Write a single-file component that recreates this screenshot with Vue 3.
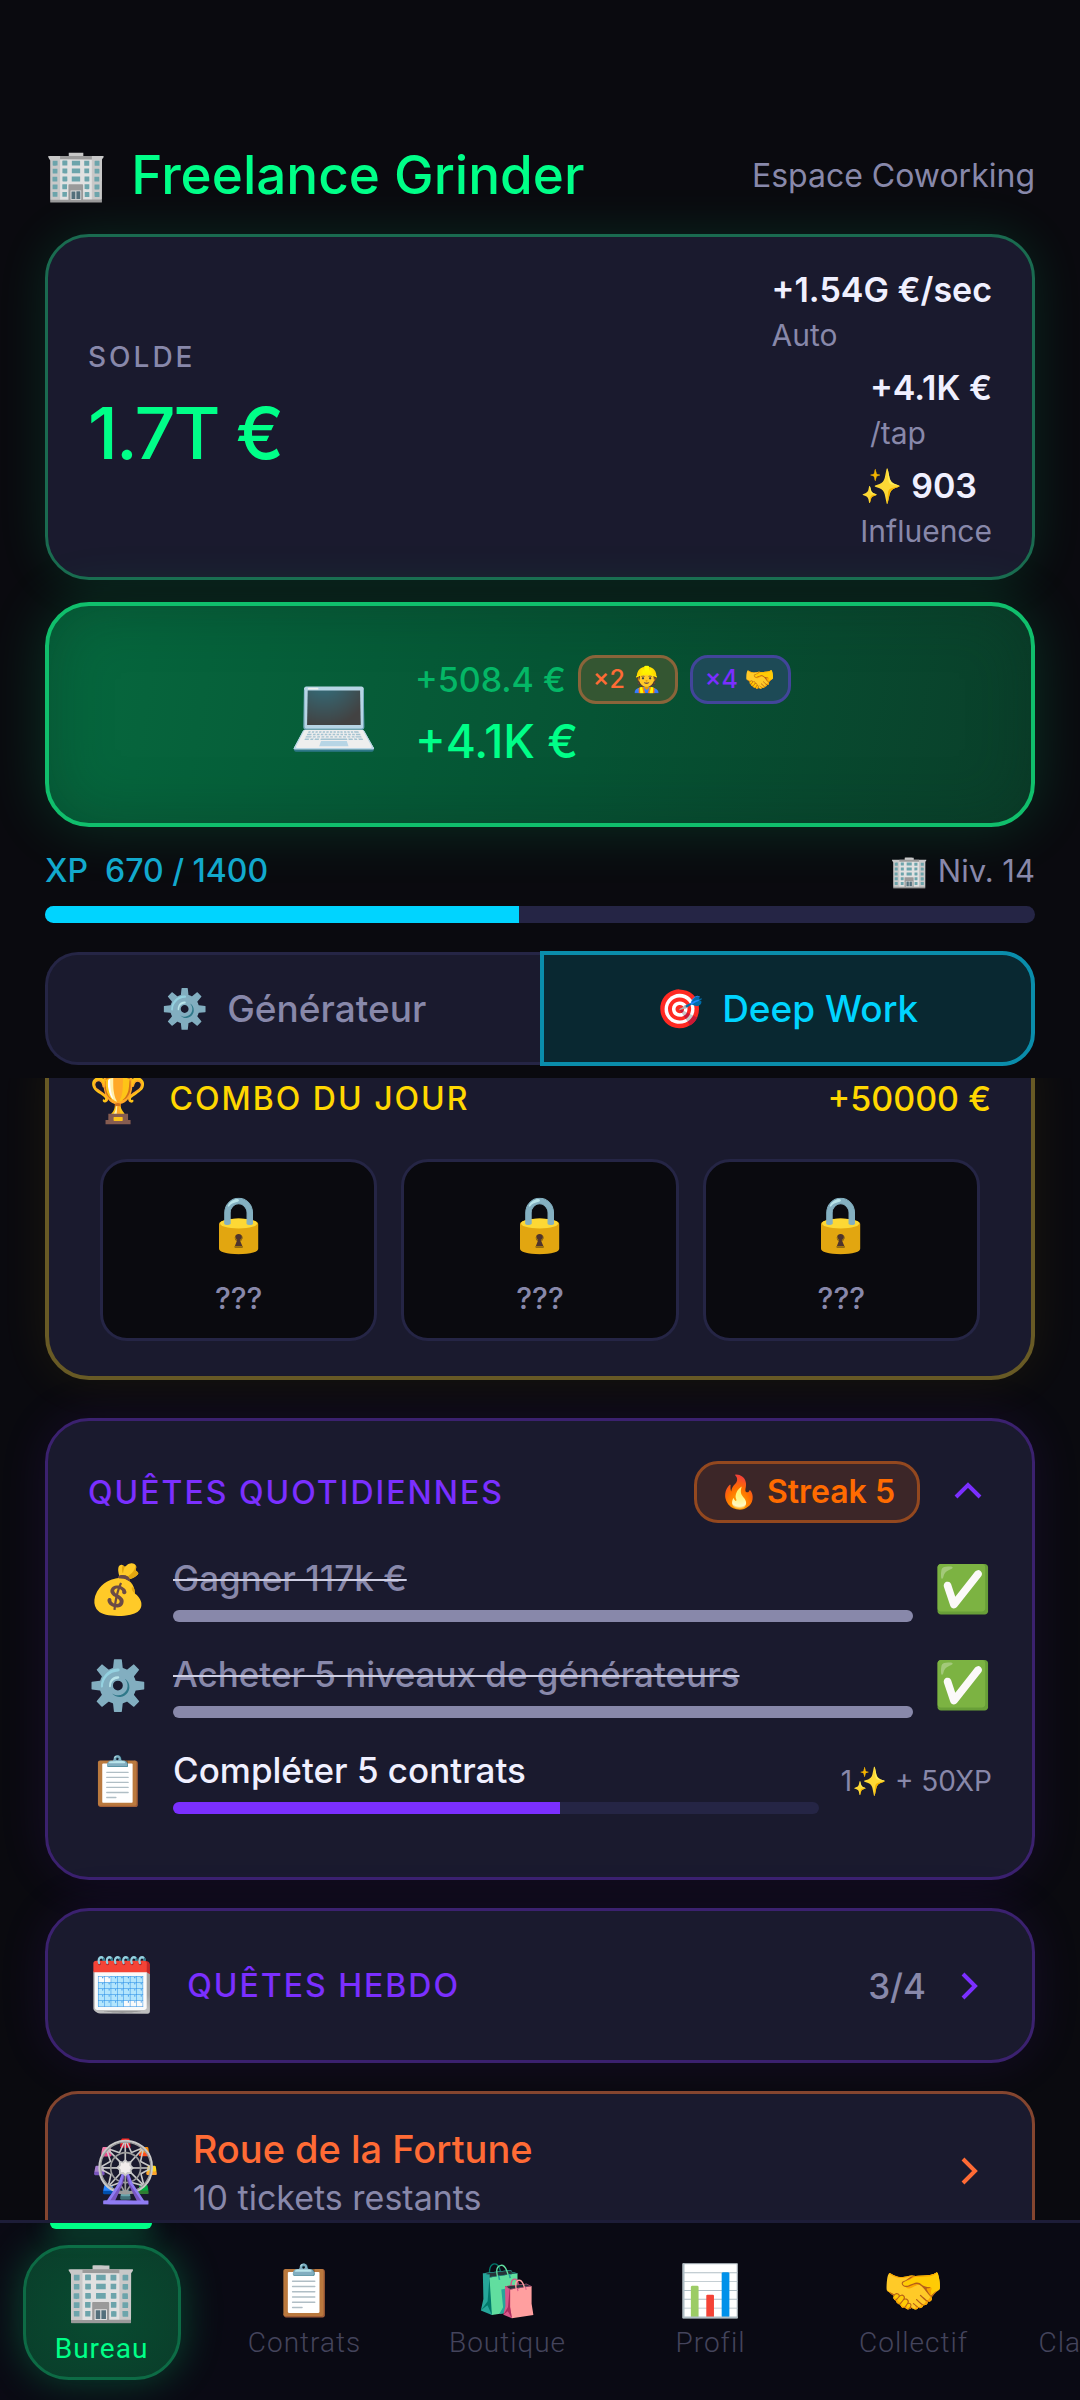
<template>
  <div class="app">
    <header class="top">
      <div class="title-row">
        <span class="emoji e-title">🏢</span>
        <h1>Freelance Grinder</h1>
        <span class="place">Espace Coworking</span>
      </div>

      <section class="balance">
        <div class="balance-main">
          <span class="balance-label">SOLDE</span>
          <strong class="balance-value">1.7T €</strong>
        </div>
        <div class="stats">
          <div v-for="stat in stats" :key="stat.label" class="stat">
            <span class="stat-value"><span v-if="stat.icon" class="emoji">{{ stat.icon }}</span> {{ stat.value }}</span>
            <span class="stat-label">{{ stat.label }}</span>
          </div>
        </div>
      </section>

      <button class="tap" type="button">
        <span class="emoji e-laptop">💻</span>
        <span class="tap-info">
          <span class="tap-line">
            <span class="tap-base">+508.4 €</span>
            <span class="boost boost-orange">×2 <span class="emoji">👷</span></span>
            <span class="boost boost-purple">×4 <span class="emoji">🤝</span></span>
          </span>
          <span class="tap-total">+4.1K €</span>
        </span>
      </button>

      <div class="xp-row">
        <span class="xp-label">XP&nbsp; {{ xp }} / {{ xpMax }}</span>
        <span class="level"><span class="emoji">🏢</span> Niv. 14</span>
      </div>
      <div class="bar xp-bar">
        <div class="fill fill-cyan" :style="{ width: `${(xp / xpMax) * 100}%` }"></div>
      </div>

      <div class="tabs">
        <button
          v-for="tab in tabs"
          :key="tab.id"
          type="button"
          class="tab"
          :class="{ active: activeTab === tab.id }"
          @click="activeTab = tab.id"
        >
          <span class="emoji tab-icon">{{ tab.icon }}</span>{{ tab.label }}
        </button>
      </div>
    </header>

    <main ref="feed" class="feed">
      <section class="card combo">
        <div class="combo-head">
          <span class="emoji e-trophy">🏆</span>
          <h2>COMBO DU JOUR</h2>
          <span class="combo-reward">+50000 €</span>
        </div>
        <div class="tiles">
          <button v-for="n in 3" :key="n" type="button" class="tile">
            <span class="emoji e-lock">🔒</span>
            <span>???</span>
          </button>
        </div>
      </section>

      <section class="card quests">
        <div class="quests-head">
          <h2>QUÊTES QUOTIDIENNES</h2>
          <span class="streak"><span class="emoji">🔥</span> Streak 5</span>
          <button type="button" class="toggle" aria-label="Replier">
            <svg class="chevron" viewBox="0 0 48 48"><path d="M12 29 24 17l12 12" /></svg>
          </button>
        </div>
        <ul class="quest-list">
          <li v-for="quest in quests" :key="quest.label" class="quest" :class="{ done: quest.progress === 100 }">
            <span class="emoji quest-icon">{{ quest.icon }}</span>
            <div class="quest-body">
              <span class="quest-label">{{ quest.label }}</span>
              <div class="bar">
                <div class="fill" :style="{ width: `${quest.progress}%` }"></div>
              </div>
            </div>
            <span v-if="quest.progress === 100" class="emoji quest-check">✅</span>
            <span v-else class="quest-reward">1<span class="emoji">✨</span> + 50XP</span>
          </li>
        </ul>
      </section>

      <button type="button" class="card weekly">
        <span class="emoji e-calendar">🗓️</span>
        <span class="weekly-title">QUÊTES HEBDO</span>
        <span class="weekly-count">3/4</span>
        <svg class="chevron" viewBox="0 0 48 48"><path d="m19 12 12 12-12 12" /></svg>
      </button>

      <button type="button" class="card wheel">
        <span class="emoji e-wheel">🎡</span>
        <span class="wheel-text">
          <span class="wheel-title">Roue de la Fortune</span>
          <span class="wheel-sub">10 tickets restants</span>
        </span>
        <svg class="chevron" viewBox="0 0 48 48"><path d="m19 12 12 12-12 12" /></svg>
      </button>
    </main>

    <nav class="nav">
      <a
        v-for="item in navItems"
        :key="item.label"
        href="#"
        class="nav-item"
        :class="{ current: item.label === 'Bureau' }"
      >
        <span class="nav-pill">
          <span class="emoji nav-icon">{{ item.icon }}</span>
          <span>{{ item.label }}</span>
        </span>
      </a>
    </nav>
  </div>
</template>

<script setup>
import { ref, onMounted } from 'vue'

const xp = ref(670)
const xpMax = ref(1400)
const activeTab = ref('deep')
const feed = ref(null)

const stats = [
  { value: '+1.54G €/sec', label: 'Auto' },
  { value: '+4.1K €', label: '/tap' },
  { icon: '✨', value: '903', label: 'Influence' }
]

const tabs = [
  { id: 'gen', icon: '⚙️', label: 'Générateur' },
  { id: 'deep', icon: '🎯', label: 'Deep Work' }
]

const quests = [
  { icon: '💰', label: 'Gagner 117k €', progress: 100 },
  { icon: '⚙️', label: 'Acheter 5 niveaux de générateurs', progress: 100 },
  { icon: '📋', label: 'Compléter 5 contrats', progress: 60 }
]

const navItems = [
  { icon: '🏢', label: 'Bureau' },
  { icon: '📋', label: 'Contrats' },
  { icon: '🛍️', label: 'Boutique' },
  { icon: '📊', label: 'Profil' },
  { icon: '🤝', label: 'Collectif' },
  { icon: '', label: 'Classement' }
]

// the feed opens slightly scrolled, under the fixed header
onMounted(() => {
  feed.value.scrollTop = 60
})
</script>

<style>
body {
  margin: 0;
  background: #0a0a0f;
}
</style>

<style scoped>
* {
  box-sizing: border-box;
}

.app {
  display: flex;
  flex-direction: column;
  height: 100vh;
  overflow: hidden;
  background: #0a0a0f;
  color: #f0f0ff;
  font-family: Inter, "Liberation Sans", sans-serif;
  font-size: 32px;
  font-weight: 500;
}

button {
  font: inherit;
  color: inherit;
  cursor: pointer;
}

h1,
h2 {
  margin: 0;
}

.emoji {
  font-family: "Noto Color Emoji", sans-serif;
  font-weight: 400;
  letter-spacing: 0;
}

/* header */
.top {
  padding: 140px 45px 12px;
}

.title-row {
  display: flex;
  align-items: center;
  height: 70px;
  margin-bottom: 24px;
}

.e-title {
  font-size: 50px;
}

h1 {
  margin-left: 24px;
  flex: 1;
  color: #00ff88;
  font-size: 53px;
  font-weight: 500;
}

.place {
  color: #8888aa;
  font-weight: 400;
}

.balance {
  display: flex;
  align-items: center;
  justify-content: space-between;
  padding: 29px 40px 25px;
  background: #1a1a2e;
  border: 3px solid #1a6b50;
  border-radius: 44px;
  box-shadow: 0 0 50px rgba(0, 255, 136, 0.12);
}

.balance-main {
  display: flex;
  flex-direction: column;
  gap: 8px;
}

.balance-label {
  color: #8888aa;
  font-size: 28px;
  line-height: 40px;
  letter-spacing: 3px;
}

.balance-value {
  color: #00ff88;
  font-size: 72px;
  font-weight: 500;
  line-height: 96px;
  letter-spacing: -2px;
}

.stats {
  display: flex;
  flex-direction: column;
  align-items: flex-end;
  gap: 8px;
}

.stat {
  display: flex;
  flex-direction: column;
}

.stat-value {
  font-size: 34px;
  font-weight: 600;
  line-height: 48px;
}

.stat-label {
  color: #8888aa;
  font-size: 30px;
  font-weight: 400;
  line-height: 42px;
}

.tap {
  display: flex;
  align-items: center;
  justify-content: center;
  gap: 36px;
  width: 100%;
  margin-top: 22px;
  padding: 49px 40px 53px;
  border: 4px solid #10bf6c;
  border-radius: 44px;
  background: linear-gradient(100deg, #06683e, #065434 55%, #0a3f2a);
  box-shadow: 0 0 60px rgba(0, 255, 136, 0.16), inset 0 0 60px rgba(10, 40, 30, 0.35);
}

.e-laptop {
  font-size: 72px;
  line-height: 90px;
}

.tap-info {
  display: flex;
  flex-direction: column;
  align-items: flex-start;
  gap: 8px;
}

.tap-line {
  display: flex;
  align-items: center;
  gap: 12px;
}

.tap-base {
  color: #04b766;
  font-size: 34px;
}

.boost {
  padding: 0 12px;
  border: 3px solid;
  border-radius: 18px;
  font-size: 25px;
  line-height: 43px;
}

.boost-orange {
  color: #ff6b35;
  border-color: #8a643a;
  background: #345632;
}

.boost-purple {
  color: #7b2fff;
  border-color: #42459a;
  background: #1d4a56;
}

.tap-total {
  color: #00ff88;
  font-size: 46px;
  font-weight: 500;
  line-height: 58px;
}

.xp-row {
  display: flex;
  justify-content: space-between;
  margin-top: 24px;
  line-height: 40px;
}

.xp-label {
  color: #12a9cd;
}

.level {
  color: #8888aa;
  font-weight: 400;
  font-size: 31px;
}

.bar {
  height: 12px;
  overflow: hidden;
  border-radius: 6px;
  background: #252545;
}

.fill {
  height: 100%;
  background: #7b2fff;
}

.xp-bar {
  height: 17px;
  margin-top: 14px;
  border-radius: 9px;
}

.fill-cyan {
  background: #00d4ff;
}

.tabs {
  display: flex;
  align-items: center;
  margin-top: 28px;
}

.tab {
  display: flex;
  align-items: center;
  justify-content: center;
  gap: 18px;
  width: 50%;
  height: 113px;
  padding: 0;
  border: 3px solid #252545;
  border-right: 0;
  border-radius: 33px 0 0 33px;
  background: #1a1a2e;
  color: #8888aa;
  font-size: 37px;
}

.tab-icon {
  font-size: 38px;
}

.tab:last-child {
  border-radius: 0 33px 33px 0;
}

.tab.active {
  height: 115px;
  border: 4px solid #0a8dab;
  background: #092831;
  color: #00d4ff;
}

/* feed */
.feed {
  flex: 1;
  min-height: 0;
  overflow-y: auto;
  scrollbar-width: none;
  padding: 16px 45px 40px;
}

.card {
  display: block;
  width: 100%;
  border-radius: 44px;
  background: #1a1a2e;
  text-align: left;
}

h2,
.weekly-title {
  font-size: 32px;
  font-weight: 500;
  letter-spacing: 2px;
}

.combo {
  padding: 30px 40px 35px;
  border: 4px solid #685a25;
  box-shadow: 0 0 50px rgba(255, 215, 0, 0.07);
}

.combo-head {
  display: flex;
  align-items: center;
  height: 60px;
  color: #ffd700;
}

.e-trophy {
  font-size: 47px;
}

.combo-head h2 {
  flex: 1;
  margin-left: 22px;
}

.combo-reward {
  font-size: 34px;
}

.tiles {
  display: grid;
  grid-template-columns: repeat(3, 1fr);
  gap: 24px;
  margin: 31px 11px 0;
}

.tile {
  display: flex;
  flex-direction: column;
  align-items: center;
  gap: 20px;
  padding: 30px 0 20px;
  border: 3px solid #252545;
  border-radius: 27px;
  background: #0a0a0f;
  color: #8888aa;
  font-size: 30px;
  line-height: 40px;
}

.e-lock {
  font-size: 54px;
  line-height: 66px;
}

.quests {
  margin-top: 38px;
  padding: 40px 40px 63px;
  border: 3px solid #3b216f;
  box-shadow: 0 0 50px rgba(123, 47, 255, 0.1);
}

.quests-head {
  display: flex;
  align-items: center;
  height: 62px;
}

.quests-head h2 {
  flex: 1;
  color: #7b2fff;
}

.streak {
  padding: 0 22px;
  border: 3px solid #93481f;
  border-radius: 24px;
  background: #3c2628;
  color: #ff6b00;
  font-size: 32px;
  font-weight: 600;
  line-height: 56px;
}

.toggle {
  display: flex;
  margin-left: 24px;
  padding: 0;
  border: 0;
  background: none;
}

.chevron {
  width: 48px;
  height: 48px;
  fill: none;
  stroke: #7b2fff;
  stroke-width: 4;
}

.quest-list {
  display: flex;
  flex-direction: column;
  gap: 30px;
  margin: 33px 0 0;
  padding: 0;
  list-style: none;
}

.quest {
  display: flex;
  align-items: center;
  height: 66px;
}

.quest-icon {
  width: 85px;
  font-size: 48px;
}

.quest-body {
  display: flex;
  flex-direction: column;
  flex: 1;
  gap: 10px;
}

.quest-label {
  font-size: 35px;
  line-height: 44px;
}

.done .quest-label {
  color: #8888aa;
  text-decoration: line-through 2px #d0d0e4;
}

.done .fill {
  background: #8888aa;
}

.quest-check {
  margin-left: 22px;
  font-size: 46px;
}

.quest-reward {
  margin-left: 22px;
  color: #8888aa;
  font-size: 28px;
  font-weight: 400;
}

.weekly {
  display: flex;
  align-items: center;
  height: 155px;
  margin-top: 28px;
  padding: 0 40px;
  border: 3px solid #3b216f;
  box-shadow: 0 0 50px rgba(123, 47, 255, 0.1);
}

.e-calendar {
  font-size: 54px;
}

.weekly-title {
  flex: 1;
  margin-left: 32px;
  color: #7b2fff;
}

.weekly-count {
  margin-right: 18px;
  color: #8888aa;
  font-size: 35px;
}

.wheel {
  display: flex;
  align-items: center;
  margin-top: 28px;
  padding: 28px 40px 30px;
  border: 3px solid #84452f;
  border-radius: 33px;
}

.e-wheel {
  font-size: 60px;
}

.wheel-text {
  display: flex;
  flex-direction: column;
  flex: 1;
  margin-left: 30px;
}

.wheel-title {
  color: #ff6b35;
  font-size: 38px;
  line-height: 54px;
}

.wheel-sub {
  color: #8888aa;
  font-size: 34px;
  font-weight: 400;
  line-height: 44px;
}

.wheel .chevron {
  stroke: #ff6b35;
}

/* bottom navigation */
.nav {
  display: flex;
  flex-shrink: 0;
  height: 180px;
  overflow: hidden;
  border-top: 3px solid #1d1d38;
  background: #0a0a14;
}

.nav-item {
  position: relative;
  display: flex;
  flex: 0 0 203px;
  justify-content: center;
  padding-top: 22px;
  color: #44445c;
  font-family: Roboto, "Liberation Sans", sans-serif;
  font-size: 28px;
  font-weight: 300;
  letter-spacing: 1px;
  text-decoration: none;
}

.nav-pill {
  display: flex;
  flex-direction: column;
  align-items: center;
  gap: 2px;
  width: 158px;
  height: 135px;
  padding-top: 11px;
  border: 3px solid transparent;
  border-radius: 46px;
  line-height: 36px;
}

.nav-icon {
  height: 64px;
  font-size: 50px;
  line-height: 64px;
}

.current {
  color: #00ff88;
  font-weight: 400;
}

.current .nav-pill {
  gap: 8px;
  border-color: #0d6b45;
  background: radial-gradient(#084c31, #0a3d2a);
  box-shadow: 0 0 40px rgba(0, 255, 136, 0.25);
}

.current .nav-icon {
  font-size: 58px;
}

.current::before {
  content: "";
  position: absolute;
  top: 0;
  left: 50px;
  width: 102px;
  height: 6px;
  border-radius: 0 0 6px 6px;
  background: #00ff88;
  box-shadow: 0 0 24px rgba(0, 255, 136, 0.6);
}
</style>
